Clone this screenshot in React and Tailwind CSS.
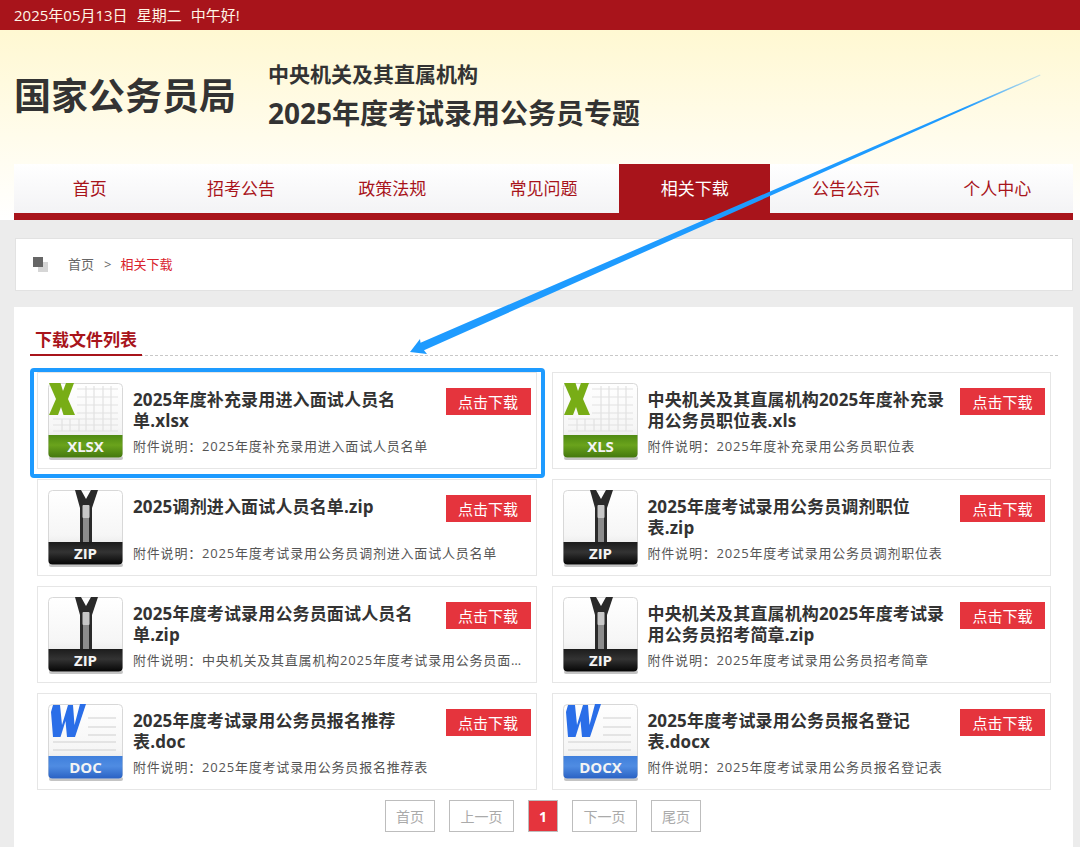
import React from 'react';

const font = { fontFamily: '"Open Sans", "Noto Sans CJK SC", sans-serif' };

const navItems = ['首页', '招考公告', '政策法规', '常见问题', '相关下载', '公告公示', '个人中心'];

const files = [
  { type: 'xlsx', title: '2025年度补充录用进入面试人员名单.xlsx', desc: '附件说明：2025年度补充录用进入面试人员名单' },
  { type: 'xls', title: '中央机关及其直属机构2025年度补充录用公务员职位表.xls', desc: '附件说明：2025年度补充录用公务员职位表' },
  { type: 'zip', title: '2025调剂进入面试人员名单.zip', desc: '附件说明：2025年度考试录用公务员调剂进入面试人员名单' },
  { type: 'zip', title: '2025年度考试录用公务员调剂职位表.zip', desc: '附件说明：2025年度考试录用公务员调剂职位表' },
  { type: 'zip', title: '2025年度考试录用公务员面试人员名单.zip', desc: '附件说明：中央机关及其直属机构2025年度考试录用公务员面试人员名单' },
  { type: 'zip', title: '中央机关及其直属机构2025年度考试录用公务员招考简章.zip', desc: '附件说明：2025年度考试录用公务员招考简章' },
  { type: 'doc', title: '2025年度考试录用公务员报名推荐表.doc', desc: '附件说明：2025年度考试录用公务员报名推荐表' },
  { type: 'docx', title: '2025年度考试录用公务员报名登记表.docx', desc: '附件说明：2025年度考试录用公务员报名登记表' },
];

const bands = {
  xlsx: ['#4f8a12', '#6aa31c', '#44780e'],
  xls: ['#4f8a12', '#6aa31c', '#44780e'],
  zip: ['#1c1c1c', '#333333', '#050505'],
  doc: ['#3f7fdc', '#4f8ce2', '#2a62c4'],
  docx: ['#3f7fdc', '#4f8ce2', '#2a62c4'],
};

// file type icon, x/w/zipper drawn on the sheet
const FileIcon = ({ type, id }) => {
  const isExcel = type === 'xlsx' || type === 'xls';
  const isWord = type === 'doc' || type === 'docx';
  return (
    <svg width="76" height="78" viewBox="0 0 76 78" className="shrink-0">
      <defs>
        <linearGradient id={'sheet' + id} x1="0" y1="0" x2="0" y2="1">
          <stop offset="0" stopColor="#ffffff" />
          <stop offset="0.6" stopColor="#f6f6f6" />
          <stop offset="1" stopColor="#d8d8d8" />
        </linearGradient>
        <linearGradient id={'band' + id} x1="0" y1="0" x2="0" y2="1">
          <stop offset="0" stopColor={bands[type][0]} />
          <stop offset="0.45" stopColor={bands[type][1]} />
          <stop offset="1" stopColor={bands[type][2]} />
        </linearGradient>
      </defs>
      <rect x="1" y="73" width="74" height="4" rx="2" fill="#c4c4c4" />
      <rect x="0.5" y="0.5" width="74" height="74" rx="4" fill={'url(#sheet' + id + ')'} stroke="#d8d8d8" />
      {isExcel && (
        <g stroke="#e2e2e2" strokeWidth="1.2" fill="none">
          <path d="M29 6H70M29 14H70M29 22H70M29 30H70M5 36H70M5 42H70M5 48H70" />
          <path d="M38 3V36M46 3V36M55 3V36M63 3V48M14 36V48M22 36V48M31 36V48M38 36V48M46 36V48M55 36V48" />
        </g>
      )}
      {isExcel && <path d="M1 0H12.5L15 8L18 0H26L20 16L27 32H15.5L13 24L10 32H1L8 16Z" fill="#78ad16" />}
      {isWord && (
        <g stroke="#cfcfcf" strokeWidth="1.2" fill="none">
          <path d="M40 14H68M40 23H68M40 31H68M5 38H68M5 46H68" />
        </g>
      )}
      {isWord && <path d="M3 8L5 1H12L14 21L20 1H25L26.5 21L32 0H38L27 33H19L17.5 17L12.5 33H5Z" fill="#2a6ee8" />}
      {type === 'zip' && (
        <g>
          <path d="M27 0H33L38 9L43 0H50L44 18V53H32V18Z" fill="#2a2a2a" />
          <rect x="35" y="15" width="6" height="38" fill="#8c8c8c" />
          <rect x="34.5" y="15" width="7" height="13" rx="1" fill="#c8c8c8" />
        </g>
      )}
      <path d="M0.5 52H74.5V70.5a4 4 0 0 1-4 4H4.5a4 4 0 0 1-4-4Z" fill={'url(#band' + id + ')'} />
      <text x="37.5" y="69" textAnchor="middle" fill="#f4f4f4" fontSize="15" fontWeight="700" style={font}>
        {type.toUpperCase()}
      </text>
    </svg>
  );
};

const FileCard = ({ file, id }) => (
  <div className="flex h-[97px] gap-[9px] border border-[#e6e6e6] bg-white pb-[13px] pl-[10px] pr-[5px] pt-[10px]">
    <FileIcon type={file.type} id={id} />
    <div className="flex min-w-0 flex-1 flex-col justify-between">
      <div className="flex justify-between">
        <div className="mt-[6px] w-[300px] text-[17px] font-bold leading-[21px] tracking-[0.15px] text-[#333333]">{file.title}</div>
        <button className="mt-[5px] h-[27px] w-[85px] shrink-0 bg-[#e5343d] text-[15px] leading-[29px] text-white">点击下载</button>
      </div>
      <div className="truncate pr-[8px] text-[13px] leading-[18px] tracking-[0.8px] text-[#555555]">{file.desc}</div>
    </div>
  </div>
);

const PageBtn = ({ children, active, width }) => (
  <a className={'flex h-[32px] items-center justify-center border border-[#bdbdbd] text-[14px] ' + width + ' ' + (active ? 'bg-[#e5343d] font-bold text-white' : 'bg-white text-[#aaaaaa]')}>
    {children}
  </a>
);

export default function App() {
  return (
    <div className="relative h-[847px] w-[1080px] overflow-hidden bg-[#ececec]" style={font}>
      {/* top bar */}
      <div className="flex h-[30px] items-center gap-[9px] bg-[#a8141b] pl-[14px] text-[15px] text-[#fff5e6]">
        <span>2025年05月13日</span>
        <span>星期二</span>
        <span>中午好!</span>
      </div>

      {/* header + nav */}
      <div className="h-[190px] bg-gradient-to-b from-[#fff8d2] to-white pl-[14px] pr-[7px]">
        <div className="flex h-[134px] items-center">
          <h1 className="mb-[2px] w-[254px] text-[37px] font-bold leading-[44px] text-[#333333]">国家公务员局</h1>
          <div className="mb-[1px] text-[#333333]">
            <div className="text-[21px] font-bold leading-[27px]">中央机关及其直属机构</div>
            <div className="mt-[5px] text-[28px] font-bold leading-[40px]">2025年度考试录用公务员专题</div>
          </div>
        </div>
        <div className="flex h-[56px] border-b-[7px] border-[#a8141b] bg-gradient-to-b from-white to-[#f3f3f5]">
          {navItems.map((item) => (
            <div
              key={item}
              className={'flex flex-1 items-center justify-center text-[17px] ' + (item === '相关下载' ? 'bg-[#a8141b] text-white' : 'text-[#a8141b]')}
            >
              {item}
            </div>
          ))}
        </div>
      </div>

      {/* breadcrumb */}
      <div className="ml-[15px] mr-[7px] mt-[18px] flex h-[53px] items-center border border-[#e2e2e2] bg-white pl-[17px] text-[13px]">
        <div className="relative h-[15px] w-[15px]">
          <div className="absolute bottom-0 right-0 h-[10px] w-[10px] bg-[#d6d6d6]"></div>
          <div className="absolute left-0 top-0 h-[10px] w-[10px] bg-[#666666]"></div>
        </div>
        <span className="ml-[20px] text-[#666666]">首页</span>
        <span className="ml-[10px] mr-[9px] text-[#666666]">&gt;</span>
        <span className="text-[#d9232d]">相关下载</span>
      </div>

      {/* list panel */}
      <div className="ml-[14px] mr-[7px] mt-[16px] h-[600px] bg-white pl-[16px] pr-[15px] pt-[20px]">
        <div className="border-b border-dashed border-[#c8c8c8]">
          <div className="-mb-px inline-block border-b-2 border-[#a8141b] px-[5px] pb-[1px] text-[17px] font-bold leading-[26px] text-[#a8141b]">
            下载文件列表
          </div>
        </div>
        <div className="mt-[16px] grid grid-cols-2 gap-x-[15px] gap-y-[10px] px-[7px]">
          {files.map((file, i) => (
            <FileCard key={i} file={file} id={i} />
          ))}
        </div>
        <div className="mt-[10px] flex justify-center gap-[14px] pr-[2px]">
          <PageBtn width="w-[50px]">首页</PageBtn>
          <PageBtn width="w-[65px]">上一页</PageBtn>
          <PageBtn width="w-[30px]" active>1</PageBtn>
          <PageBtn width="w-[65px]">下一页</PageBtn>
          <PageBtn width="w-[50px]">尾页</PageBtn>
        </div>
      </div>

      {/* annotation on top of the page */}
      <div className="absolute left-[30px] top-[368px] h-[110px] w-[515px] rounded-[4px] border-[4px] border-[#1e9bff]"></div>
      <svg className="pointer-events-none absolute left-0 top-0" width="1080" height="847">
        <defs>
          <linearGradient id="arrowFade" gradientUnits="userSpaceOnUse" x1="410" y1="352" x2="1040" y2="75">
            <stop offset="0" stopColor="#1e9bff" />
            <stop offset="0.88" stopColor="#1e9bff" />
            <stop offset="1" stopColor="#1e9bff" stopOpacity="0.25" />
          </linearGradient>
        </defs>
        <path d="M410 352L420 339L420.5 342.8L1040 74.5L1040.5 75.5L424 350.2L427 354Z" fill="url(#arrowFade)" />
      </svg>
    </div>
  );
}
